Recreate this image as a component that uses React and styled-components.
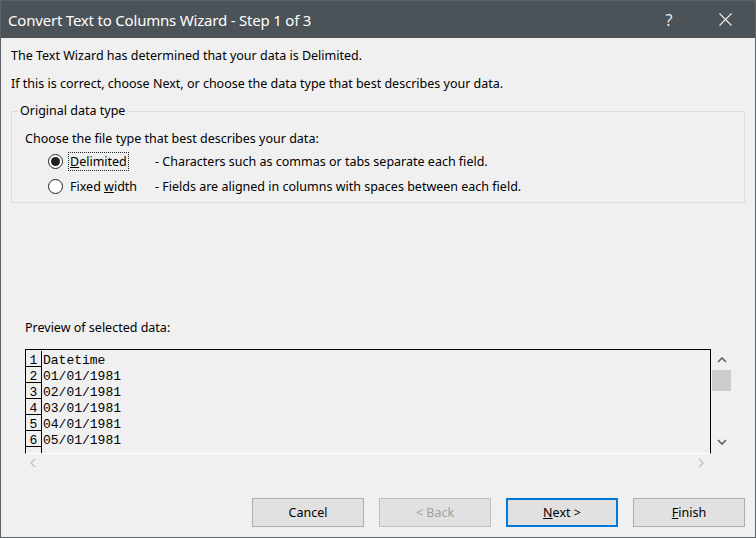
import React from 'react';
import styled, { createGlobalStyle } from 'styled-components';

const GlobalStyle = createGlobalStyle`
  html, body {
    margin: 0;
    padding: 0;
    background: #f0f0f0;
  }
  * {
    box-sizing: border-box;
  }
`;

const Window = styled.div`
  width: 756px;
  height: 538px;
  display: flex;
  flex-direction: column;
  border: 1px solid #5c6166;
  background: #f0f0f0;
  font-family: 'Noto Sans', 'Open Sans', sans-serif;
  font-size: 12.5px;
  color: #000;
`;

const TitleBar = styled.div`
  height: 37px;
  flex: none;
  display: flex;
  align-items: center;
  background: #4b5258;
  color: #fff;
  padding: 0 7px 0 7px;
`;

const Title = styled.div`
  flex: 1;
  font-size: 15px;
  letter-spacing: -0.2px;
`;

const TitleButton = styled.div`
  width: ${({ w }) => w}px;
  height: 37px;
  display: flex;
  align-items: center;
  justify-content: center;
  font-size: 16px;
  color: #e8e8e8;
`;

const Body = styled.div`
  flex: 1;
  display: flex;
  flex-direction: column;
  padding: 0 10px 10px 10px;
`;

const Line = styled.div`
  line-height: 16px;
  margin-top: ${({ top }) => top}px;
  white-space: nowrap;
`;

const GroupBox = styled.fieldset`
  margin: 11px 0 0 0;
  padding: 0;
  border: 1px solid #dcdcdc;
`;

const Legend = styled.legend`
  margin-left: 6px;
  padding: 0 2px;
  line-height: 16px;
`;

const GroupContent = styled.div`
  display: flex;
  flex-direction: column;
  padding: 12px 0 6px 13px;
`;

const RadioList = styled.div`
  display: flex;
  flex-direction: column;
  gap: 5px;
  margin-top: 4px;
  padding-left: 24px;
`;

const RadioRow = styled.div`
  height: 20px;
  display: flex;
  align-items: center;
  white-space: nowrap;
`;

const RadioCircle = styled.span`
  width: 15px;
  height: 15px;
  flex: none;
  border-radius: 50%;
  border: 1px solid #222;
  background: #fff;
  display: flex;
  align-items: center;
  justify-content: center;
  margin: 0 5px 0 -1px;

  &::after {
    content: '';
    width: 9px;
    height: 9px;
    border-radius: 50%;
    background: ${({ checked }) => (checked ? '#222' : 'transparent')};
  }
`;

const LabelCell = styled.div`
  width: 87px;
  flex: none;
`;

const LabelText = styled.span`
  display: inline-block;
  line-height: 17px;
  padding: 0 1px;
  border: 1px dotted ${({ focused }) => (focused ? '#222' : 'transparent')};
`;

const Spacer = styled.div`
  flex: 1;
`;

const PreviewLabel = styled(Line)`
  margin-left: 14px;
`;

const PreviewFrame = styled.div`
  margin: 13px 0 0 14px;
  width: 707px;
  display: grid;
  grid-template-columns: 686px 21px;
  grid-template-rows: 105px 17px;
`;

const Grid = styled.div`
  border: 1px solid #000;
  border-bottom-color: #fff;
  padding-top: 1px;
  overflow: hidden;
  font-family: 'Liberation Mono', 'Courier New', monospace;
  font-size: 13px;
`;

const DataRow = styled.div`
  display: flex;
  height: 16px;
`;

const RowNum = styled.div`
  width: 16px;
  flex: none;
  border-right: 1px solid #000;
  border-bottom: 1px solid ${({ last }) => (last ? 'transparent' : '#000')};
  text-align: center;
  line-height: 15px;
  padding-top: 2px;
`;

const Cell = styled.div`
  padding: 2px 0 0 1px;
  line-height: 15px;
  white-space: pre;
`;

const VScroll = styled.div`
  display: flex;
  flex-direction: column;
  padding-bottom: 4px;
`;

const ScrollBtn = styled.div`
  height: ${({ h }) => h}px;
  display: flex;
  align-items: center;
  justify-content: center;
`;

const Thumb = styled.div`
  height: 21px;
  margin-left: 1px;
  width: 19px;
  background: #cdcdcd;
`;

const HScroll = styled.div`
  display: flex;
  align-items: center;
  justify-content: space-between;
  padding: 0 7px 0 5px;
`;

const ButtonRow = styled.div`
  margin-top: 27px;
  display: flex;
  justify-content: flex-end;
  gap: 15px;
`;

const Button = styled.div`
  width: 112px;
  height: 29px;
  display: flex;
  align-items: center;
  justify-content: center;
  background: #e1e1e1;
  border: ${({ primary }) => (primary ? '2px' : '1px')} solid;
  border-color: ${({ disabled, primary }) => (primary ? '#0078d7' : disabled ? '#bfbfbf' : '#adadad')};
  color: ${({ disabled }) => (disabled ? '#a0a0a0' : '#000')};
`;

const Chevron = ({ dir, color }) => {
  const pts = {
    up: '1,5 5,1 9,5',
    down: '1,1 5,5 9,1',
    left: '5,1 1,5 5,9',
    right: '1,1 5,5 1,9',
  }[dir];
  const vertical = dir === 'up' || dir === 'down';
  return (
    <svg width={vertical ? 10 : 6} height={vertical ? 6 : 10} viewBox={vertical ? '0 0 10 6' : '0 0 6 10'}>
      <polyline points={pts} fill="none" stroke={color} strokeWidth="1.6" />
    </svg>
  );
};

const rows = ['Datetime', '01/01/1981', '02/01/1981', '03/01/1981', '04/01/1981', '05/01/1981', ''];

const App = () => (
  <>
    <GlobalStyle />
    <Window>
      <TitleBar>
        <Title>Convert Text to Columns Wizard - Step 1 of 3</Title>
        <TitleButton w={66}>?</TitleButton>
        <TitleButton w={46}>
          <svg width="13" height="13" viewBox="0 0 13 13">
            <path d="M0.5 0.5 L12.5 12.5 M12.5 0.5 L0.5 12.5" stroke="#f2f2f2" strokeWidth="1.1" />
          </svg>
        </TitleButton>
      </TitleBar>
      <Body>
        <Line top={10}>The Text Wizard has determined that your data is Delimited.</Line>
        <Line top={12}>If this is correct, choose Next, or choose the data type that best describes your data.</Line>
        <GroupBox>
          <Legend>Original data type</Legend>
          <GroupContent>
            <Line top={0}>Choose the file type that best describes your data:</Line>
            <RadioList>
              <RadioRow>
                <RadioCircle checked />
                <LabelCell>
                  <LabelText focused><u>D</u>elimited</LabelText>
                </LabelCell>
                <span>- Characters such as commas or tabs separate each field.</span>
              </RadioRow>
              <RadioRow>
                <RadioCircle />
                <LabelCell>
                  <LabelText>Fixed <u>w</u>idth</LabelText>
                </LabelCell>
                <span>- Fields are aligned in columns with spaces between each field.</span>
              </RadioRow>
            </RadioList>
          </GroupContent>
        </GroupBox>
        <Spacer />
        <PreviewLabel top={0}>Preview of selected data:</PreviewLabel>
        <PreviewFrame>
          <Grid>
            {rows.map((r, i) => (
              <DataRow key={i}>
                <RowNum last={i === rows.length - 1}>{i < rows.length - 1 ? i + 1 : ''}</RowNum>
                <Cell>{r}</Cell>
              </DataRow>
            ))}
          </Grid>
          <VScroll>
            <ScrollBtn h={21}>
              <Chevron dir="up" color="#606060" />
            </ScrollBtn>
            <Thumb />
            <Spacer />
            <ScrollBtn h={17}>
              <Chevron dir="down" color="#606060" />
            </ScrollBtn>
          </VScroll>
          <HScroll>
            <Chevron dir="left" color="#c8c8c8" />
            <Chevron dir="right" color="#c8c8c8" />
          </HScroll>
          <div />
        </PreviewFrame>
        <ButtonRow>
          <Button>Cancel</Button>
          <Button disabled>&lt; Back</Button>
          <Button primary><span><u>N</u>ext &gt;</span></Button>
          <Button><span><u>F</u>inish</span></Button>
        </ButtonRow>
      </Body>
    </Window>
  </>
);

export default App;
